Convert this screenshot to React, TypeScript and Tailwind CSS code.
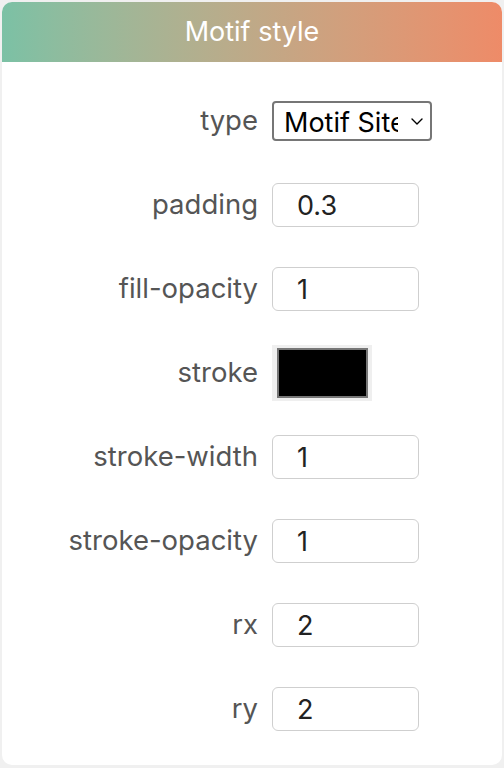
const FIELDS = [
  { label: 'padding', value: '0.3' },
  { label: 'fill-opacity', value: '1' },
  { label: 'stroke', color: '#000000' },
  { label: 'stroke-width', value: '1' },
  { label: 'stroke-opacity', value: '1' },
  { label: 'rx', value: '2' },
  { label: 'ry', value: '2' },
];

function Row({ label, children }: { label: string; children: React.ReactNode }) {
  return (
    <div className="flex h-[84px] items-center">
      <label className="w-[256px] text-right text-[27.5px] text-[#555]">{label}</label>
      <div className="ml-[14px] flex items-center">{children}</div>
    </div>
  );
}

export default function App() {
  return (
    <div className="min-h-[768px] bg-[#f0f0f0] p-[2px] font-['Inter','Liberation_Sans',Arial,sans-serif]">
      <div className="overflow-hidden rounded-[10px] bg-white">
        <div className="flex h-[60px] items-center justify-center bg-gradient-to-r from-[#7bc1a5] to-[#ee8b68] text-[27px] text-white">
          Motif style
        </div>
        <div className="pt-[17px] pb-[14px]">
          <Row label="type">
            <div className="relative">
              <select
                defaultValue="sites"
                className="h-[40px] w-[160px] appearance-none rounded-[4px] border-2 border-[#767676] bg-white pl-[10px] pr-[32px] text-[27px] text-black outline-none"
              >
                <option value="sites">Motif Sites</option>
                <option value="logo">Motif Logo</option>
              </select>
              <svg
                viewBox="0 0 12 7"
                className="pointer-events-none absolute right-[9px] top-[17px] h-[7px] w-[12px]"
                fill="none"
                stroke="#000"
                strokeWidth="1.4"
                strokeLinecap="round"
                strokeLinejoin="round"
              >
                <path d="M1 1 L6 6 L11 1" />
              </svg>
            </div>
          </Row>
          {FIELDS.map((f) => (
            <Row key={f.label} label={f.label}>
              {f.color ? (
                <div className="flex h-[56px] w-[100px] items-center justify-center bg-[#efefef]">
                  <div className="h-[50px] w-[91px] border-2 border-[#777]" style={{ backgroundColor: f.color }} />
                </div>
              ) : (
                <input
                  defaultValue={f.value}
                  className="h-[44px] w-[147px] rounded-[6px] border-[1.5px] border-[#cfcfcf] pl-[24px] text-[27px] text-[#222] outline-none"
                />
              )}
            </Row>
          ))}
        </div>
      </div>
    </div>
  );
}
